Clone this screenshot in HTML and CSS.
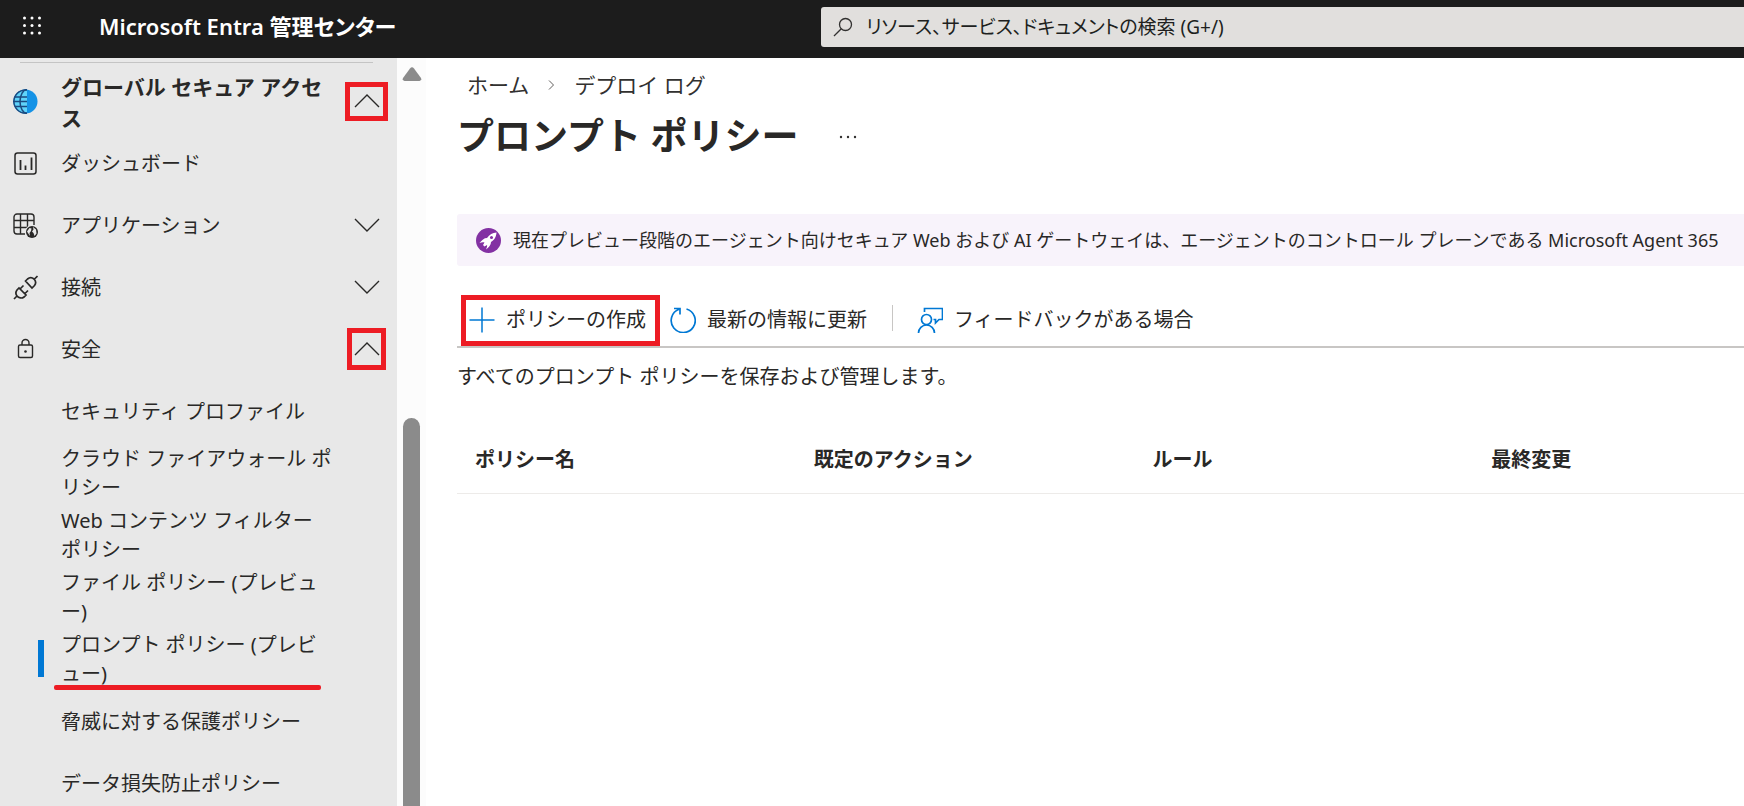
FILE: index.html
```html
<!DOCTYPE html>
<html lang="ja">
<head>
<meta charset="utf-8">
<title>プロンプト ポリシー - Microsoft Entra 管理センター</title>
<link rel="stylesheet" href="styles.css">
</head>
<body>
<header class="topbar">
  <div class="brand-area">
    <button class="waffle" type="button" aria-label="アプリ起動ツール">
      <svg width="20" height="20" viewBox="0 0 20 20" fill="#fff"><circle cx="2.500" cy="2" r="1.500"/><circle cx="10" cy="2" r="1.500"/><circle cx="17.500" cy="2" r="1.500"/><circle cx="2.500" cy="9.500" r="1.500"/><circle cx="10" cy="9.500" r="1.500"/><circle cx="17.500" cy="9.500" r="1.500"/><circle cx="2.500" cy="17" r="1.500"/><circle cx="10" cy="17" r="1.500"/><circle cx="17.500" cy="17" r="1.500"/></svg>
    </button>
    <a class="brand" href="#">Microsoft Entra 管理センター</a>
  </div>
  <div class="search">
    <svg width="20" height="20" viewBox="0 0 20 20" fill="none" stroke="#323130" stroke-width="1.3"><circle cx="12.5" cy="7.5" r="6"/><path d="M8.3 11.7 1 19"/></svg>
    <input class="search-input" type="text" aria-label="検索" placeholder="リソース、サービス、ドキュメントの検索 (G+/)">
  </div>
</header>
<div class="shell">
  <nav class="sidebar" aria-label="ナビゲーション">
    <div class="divider"></div>
    <ul class="menu">
      <li class="row row-head">
        <svg class="icon" width="25" height="25" viewBox="0 0 25 25"><defs><clipPath id="half"><path d="M0 0H14V25H0z"/></clipPath></defs><circle cx="12.5" cy="12.5" r="12" fill="#1492e6"/><g clip-path="url(#half)"><circle cx="12.5" cy="12.5" r="12" fill="#5fd3fa"/><g fill="none" stroke="#1b4a80" stroke-width="1.5"><circle cx="12.5" cy="12.5" r="11.6"/><ellipse cx="14" cy="12.5" rx="7" ry="12"/><path d="M2 8H14M2 17.500H14M0 12.500H14"/></g></g></svg>
        <a class="label" href="#">グローバル セキュア アクセス</a>
        <button class="toggle marked wide" type="button" aria-label="折りたたむ"><svg width="26" height="14" viewBox="0 0 26 14"><path d="M1 13 13 1 25 13"/></svg></button>
      </li>
      <li class="row">
        <svg class="icon" width="25" height="25" viewBox="0 0 25 25" fill="none" stroke="#292827" stroke-width="1.500"><rect x="2" y="2" width="21" height="21" rx="2.500"/><path d="M7.500 9V19M12.500 14.500V19M18.500 6.500V19" stroke-width="1.800"/></svg>
        <a class="label" href="#">ダッシュボード</a>
      </li>
      <li class="row">
        <svg class="icon" width="25" height="25" viewBox="0 0 25 25" fill="none" stroke="#292827" stroke-width="1.400"><path d="M12 21H4a3 3 0 0 1-3-3V4a3 3 0 0 1 3-3h14a3 3 0 0 1 3 3v8M1 7.500H21M1 14.500H14M7.500 1V21M14.500 1V14"/><circle cx="19" cy="19" r="7" fill="#e8e8e8" stroke="none"/><circle cx="19" cy="19" r="6" fill="#292827" stroke="none"/><path d="M14 18.500l2.500-3.500 2 .500-.500 2.500-1.500 2 .500 3zM20 14l3 2.500.500 4-2 2.500-1-3-1.500-1.500 1.500-2z" fill="#e8e8e8" stroke="none"/></svg>
        <a class="label" href="#">アプリケーション</a>
        <button class="toggle" type="button" aria-label="展開する"><svg width="26" height="14" viewBox="0 0 26 14"><path d="M1 1 13 13 25 1"/></svg></button>
      </li>
      <li class="row">
        <svg class="icon" width="25" height="25" viewBox="0 0 25 25" fill="none" stroke="#292827" stroke-width="1.700"><path d="M1 24l3-3M4 21a5 5 0 0 1 0-6l2-2 7 7-2 2a5 5 0 0 1-7-1zM7.500 13.500 10.500 10.500M12 18.500l3-3M21.500 4 24.500 1M12.500 6l2-2a5 5 0 0 1 6.500 0 5 5 0 0 1 .500 6.500l-2.500 2.500z"/></svg>
        <a class="label" href="#">接続</a>
        <button class="toggle" type="button" aria-label="展開する"><svg width="26" height="14" viewBox="0 0 26 14"><path d="M1 1 13 13 25 1"/></svg></button>
      </li>
      <li class="row">
        <svg class="icon" width="25" height="25" viewBox="0 0 25 25" fill="none" stroke="#292827" stroke-width="1.400"><rect x="5.500" y="8" width="14" height="12.500" rx="1.500"/><path d="M9 8V6a3.500 3.500 0 0 1 7 0v2"/><circle cx="12.500" cy="14.500" r="1.300" fill="#292827" stroke="none"/></svg>
        <a class="label" href="#">安全</a>
        <button class="toggle marked" type="button" aria-label="折りたたむ"><svg width="26" height="14" viewBox="0 0 26 14"><path d="M1 13 13 1 25 13"/></svg></button>
      </li>
    </ul>
    <ul class="menu submenu">
      <li class="row sub"><a class="label" href="#">セキュリティ プロファイル</a></li>
      <li class="row sub"><a class="label" href="#">クラウド ファイアウォール ポリシー</a></li>
      <li class="row sub"><a class="label" href="#">Web コンテンツ フィルター ポリシー</a></li>
      <li class="row sub"><a class="label" href="#">ファイル ポリシー (プレビュー)</a></li>
      <li class="row sub selected"><a class="label" href="#" aria-current="page">プロンプト ポリシー (プレビュー)</a></li>
      <li class="row sub"><a class="label" href="#">脅威に対する保護ポリシー</a></li>
      <li class="row sub"><a class="label" href="#">データ損失防止ポリシー</a></li>
    </ul>
  </nav>
  <div class="scrollbar" aria-hidden="true">
    <svg width="20" height="14" viewBox="0 0 20 14" fill="#8b8b8b"><path d="M8 1.500Q10-.8 12 1.500L19 11q1 2.500-1.500 3H2.500Q0 13.500 1 11z"/></svg>
    <div class="thumb"></div>
  </div>
  <main class="content">
    <nav class="crumbs" aria-label="階層リンク">
      <a href="#">ホーム</a>
      <svg width="7" height="10" viewBox="0 0 7 10" fill="none" stroke="#605e5c"><path d="M1 .5 5.500 5 1 9.500"/></svg>
      <a href="#">デプロイ ログ</a>
    </nav>
    <div class="title-row">
      <h1 class="title">プロンプト ポリシー</h1>
      <button class="more" type="button" aria-label="その他"><svg width="18" height="4" viewBox="0 0 18 4" fill="#323130"><circle cx="2" cy="2" r="1.200"/><circle cx="9" cy="2" r="1.200"/><circle cx="16" cy="2" r="1.200"/></svg></button>
    </div>
    <div class="banner">
      <svg class="icon" width="25" height="25" viewBox="0 0 25 25"><circle cx="12.500" cy="12.500" r="12.500" fill="#8331a3"/><path d="M20.500 4.500c-4 .300-7 2-9.500 5.500-3 0-5 2-7.500 5 2-.8 3.500-1 5-.500L7 17l1.500 1.500L11 17c.500 1.500-.300 2.500-1 4.500 3-2.500 5-4.500 5-7.500 4-2.500 5.200-5.500 5.500-9.500z" fill="#fff"/><circle cx="15.500" cy="9.500" r="1.500" fill="#8331a3"/></svg>
      <span class="banner-text">現在プレビュー段階のエージェント向けセキュア Web および AI ゲートウェイは、エージェントのコントロール プレーンである Microsoft Agent 365</span>
    </div>
    <div class="toolbar">
      <button class="command marked" type="button"><svg width="26" height="26" viewBox="0 0 26 26" fill="none" stroke="#0078d4" stroke-width="1.500"><path d="M13 .5V25.500M.5 13H25.500"/></svg>ポリシーの作成</button>
      <button class="command" type="button"><svg width="26" height="26" viewBox="0 0 26 26" fill="none" stroke="#0078d4" stroke-width="1.700"><path d="M16.500 2A12 12 0 1 1 9 2.300M4 1.500H10V7.500"/></svg>最新の情報に更新</button>
      <span class="separator"></span>
      <button class="command" type="button"><svg width="26" height="26" viewBox="0 0 26 26" fill="none" stroke="#0078d4" stroke-width="1.700"><circle cx="9.500" cy="12.500" r="5"/><path d="M1.500 26a8 8 0 0 1 16 0M7.500 5V1.500H25.500V12.500H22l-3.500 3.500V12.500H16.500"/></svg>フィードバックがある場合</button>
    </div>
    <p class="description">すべてのプロンプト ポリシーを保存および管理します。</p>
    <table class="policies">
      <thead><tr><th scope="col">ポリシー名</th><th scope="col">既定のアクション</th><th scope="col">ルール</th><th scope="col">最終変更</th></tr></thead>
    </table>
  </main>
</div>
</body>
</html>
```
FILE: styles.css
```css
* { box-sizing: border-box; }

body {
  margin: 0;
  height: 100vh;
  display: flex;
  flex-direction: column;
  overflow: hidden;
  background: #fff;
  color: #292827;
  font-family: "Noto Sans", "Noto Sans CJK JP", sans-serif;
  font-size: 20px;
  line-height: 30px;
}

a { color: inherit; text-decoration: none; }
button { padding: 0; border: 0; background: none; color: inherit; font: inherit; }
svg { flex: none; display: block; }

.topbar {
  flex: none;
  display: flex;
  height: 58px;
  padding-bottom: 4px;
  align-items: center;
  background: #1c1c1c;
}
.brand-area { flex: none; display: flex; align-items: center; width: 821px; padding: 0 0 2px 22px; }
.waffle { margin-right: 57px; }
.brand {
  color: #fff;
  font-size: 22px;
  font-weight: 600;
  font-feature-settings: "palt";
}
.search {
  flex: 1;
  display: flex;
  align-items: center;
  gap: 13px;
  height: 40px;
  padding-left: 12px;
  border-radius: 3px 0 0 3px;
  background: #e1dfdd;
}
.search-input {
  flex: 1;
  min-width: 0;
  padding: 0;
  border: 0;
  outline: 0;
  background: none;
  font: inherit;
  font-size: 19px;
  font-feature-settings: "palt";
}
.search-input::placeholder { color: #201f1e; opacity: 1; }

.shell { flex: 1; min-height: 0; display: flex; }

.sidebar { flex: none; width: 397px; overflow: hidden; background: #e8e8e8; }
.divider { height: 1px; margin: 4px 24px 0 20px; background: #c4c4c4; }
.menu { margin: 0; padding: 0; list-style: none; }
.row {
  display: flex;
  align-items: center;
  height: 62px;
  padding-left: 13px;
}
.row .label { width: 274px; margin-left: 23px; line-height: 29px; }
.row-head { height: 69px; padding-top: 7px; }
.row-head .label { padding-top: 4px; font-size: 21px; font-weight: 700; line-height: 31px; }
.toggle {
  display: flex;
  align-items: center;
  justify-content: center;
  width: 39px;
  height: 42px;
  margin-left: 12px;
}
.toggle path { fill: none; stroke: #292827; stroke-width: 1.4; }
.marked { border: 5px solid #ed1c24; }
.wide { width: 43px; height: 39px; margin-left: 10px; }
.sub { position: relative; padding-left: 38px; }
.selected::before {
  content: "";
  position: absolute;
  left: 38px;
  top: 12px;
  width: 6px;
  height: 37px;
  background: #0078d4;
}
.selected::after {
  content: "";
  position: absolute;
  left: 54px;
  bottom: 0;
  width: 267px;
  height: 5px;
  border-radius: 2px;
  background: #ed1c24;
}

.scrollbar {
  flex: none;
  display: flex;
  flex-direction: column;
  align-items: center;
  width: 29px;
  padding-top: 9px;
  background: #fcfcfc;
}
.thumb {
  flex: 1;
  width: 17px;
  margin-top: 337px;
  border-radius: 9px 9px 0 0;
  background: #8b8b8b;
}

.content { flex: 1; min-width: 0; padding: 12px 0 0 31px; }
.crumbs { display: flex; align-items: center; gap: 19px; padding-left: 10px; font-size: 21px; color: #323130; }
.title-row { display: flex; align-items: center; gap: 40px; height: 72px; }
.title { margin: 0; font-size: 37px; line-height: 54px; font-weight: 700; }
.more { padding-top: 2px; }
.banner {
  display: flex;
  align-items: center;
  gap: 12px;
  height: 52px;
  margin-top: 42px;
  padding-left: 19px;
  border-radius: 3px 0 0 3px;
  background: #f8f3fb;
  overflow: hidden;
}
.banner-text { font-size: 18px; white-space: nowrap; }
.toolbar {
  display: flex;
  align-items: flex-start;
  height: 82px;
  padding: 29px 0 0 4px;
  border-bottom: 2px solid #c8c6c4;
}
.command { display: flex; align-items: center; gap: 11px; height: 51px; padding: 0 10px 2px; }
.command.marked { padding: 0 9px 2px 3px; }
.separator { width: 1px; height: 26px; margin: 10px 14px 0 15px; background: #c8c6c4; }
.description { margin: 14px 0 0; }
.policies {
  width: 100%;
  min-width: 1355px;
  margin-top: 33px;
  table-layout: fixed;
  border-collapse: collapse;
}
.policies th {
  height: 68px;
  padding: 2px 0 0 18px;
  border-bottom: 1px solid #edebe9;
  text-align: left;
  font-weight: 700;
}
```
